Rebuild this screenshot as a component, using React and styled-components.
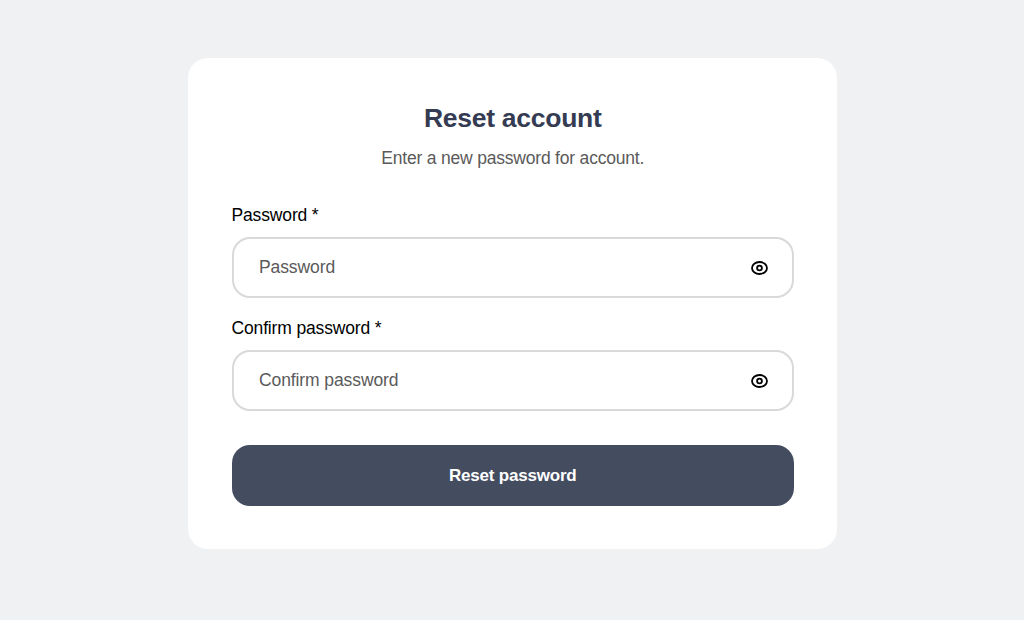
import React from 'react';
import styled, { createGlobalStyle } from 'styled-components';

const GlobalStyle = createGlobalStyle`
  html, body {
    margin: 0;
    padding: 0;
    height: 100%;
    background: #f0f1f3;
    font-family: "Liberation Sans", Arial, sans-serif;
  }
  * { box-sizing: border-box; }
`;

const Page = styled.div`
  width: 1024px;
  height: 620px;
  padding: 58px 0 0 1px;
  display: flex;
  justify-content: center;
  align-items: flex-start;
`;

const Card = styled.form`
  width: 649px;
  height: 491px;
  padding: 43px 43px 43px 43.5px;
  background: #fff;
  border-radius: 20px;
  display: flex;
  flex-direction: column;
`;

const Title = styled.h1`
  margin: 0;
  font-size: 26.5px;
  line-height: 35px;
  font-weight: 700;
  letter-spacing: -0.28px;
  color: #343b52;
  text-align: center;
`;

const Subtitle = styled.p`
  margin: 10px 0 33px;
  font-size: 17.5px;
  line-height: 24px;
  letter-spacing: -0.2px;
  color: #5a5a5a;
  text-align: center;
`;

const Label = styled.label`
  display: block;
  font-size: 17.5px;
  line-height: 24px;
  letter-spacing: -0.15px;
  color: #000;
  margin-bottom: 10px;
`;

const Field = styled.div`
  flex: none;
  height: 61px;
  margin-bottom: 18px;
  padding: 0 24.5px 0 25.5px;
  border: 2px solid #d9d9d9;
  border-radius: 18px;
  display: flex;
  align-items: center;
  justify-content: space-between;
`;

const Input = styled.input`
  flex: 1;
  border: 0;
  outline: 0;
  background: none;
  padding: 0;
  font: 17.5px "Liberation Sans", Arial, sans-serif;
  letter-spacing: -0.1px;
  color: #5a5a5a;
  &::placeholder { color: #5a5a5a; opacity: 1; }
`;

const EyeIcon = styled.svg`
  display: block;
  width: 18px;
  height: 18px;
  fill: none;
  stroke: #000;
  stroke-width: 1.8;
`;

const Submit = styled.button`
  flex: none;
  margin-top: 16px;
  height: 61px;
  border: 0;
  border-radius: 18px;
  background: #444c60;
  color: #fff;
  font: 700 17px "Liberation Sans", Arial, sans-serif;
  letter-spacing: -0.2px;
`;

const PasswordField = ({ label, placeholder }) => (
  <>
    <Label>{label} *</Label>
    <Field>
      <Input type="password" placeholder={placeholder} />
      <EyeIcon viewBox="0 0 18 18">
        <ellipse cx="9.5" cy="9" rx="7.5" ry="6" />
        <circle cx="9.5" cy="9" r="2.4" />
      </EyeIcon>
    </Field>
  </>
);

export default function App() {
  return (
    <>
      <GlobalStyle />
      <Page>
        <Card>
          <Title>Reset account</Title>
          <Subtitle>Enter a new password for account.</Subtitle>
          <PasswordField label="Password" placeholder="Password" />
          <PasswordField label="Confirm password" placeholder="Confirm password" />
          <Submit type="button">Reset password</Submit>
        </Card>
      </Page>
    </>
  );
}
